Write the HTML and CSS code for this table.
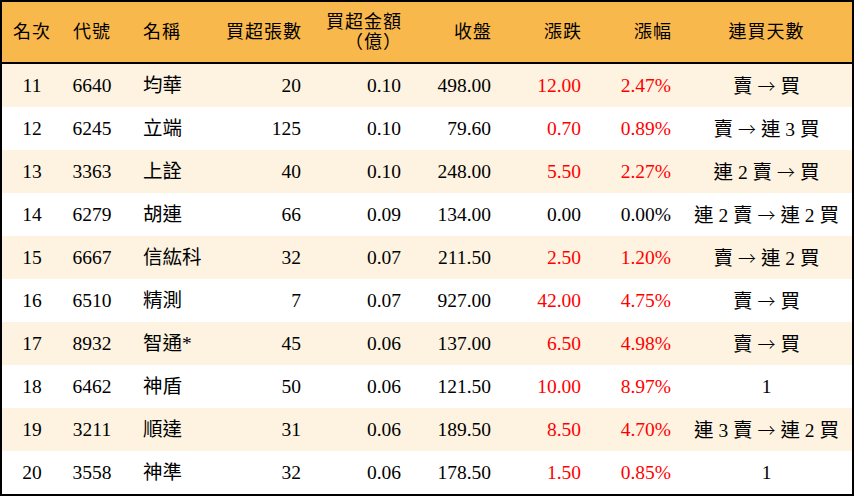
FILE: index.html
```html
<!DOCTYPE html>
<html lang="zh-Hant">
<head>
<meta charset="utf-8">
<title>買超排行</title>
<link rel="stylesheet" href="styles.css">
</head>
<body>
<table class="rank">
  <colgroup>
    <col class="w-rank"><col class="w-code"><col class="w-name"><col class="w-vol"><col class="w-amt"><col class="w-close"><col class="w-chg"><col class="w-pct"><col class="w-days">
  </colgroup>
  <thead>
    <tr>
      <th class="c">名次</th>
      <th class="c">代號</th>
      <th class="l">名稱</th>
      <th class="r">買超張數</th>
      <th class="r">買超金額<br>（億）</th>
      <th class="r">收盤</th>
      <th class="r">漲跌</th>
      <th class="r">漲幅</th>
      <th class="c">連買天數</th>
    </tr>
  </thead>
  <tbody>
    <tr class="odd"><td class="c">11</td><td class="c">6640</td><td class="l">均華</td><td class="r">20</td><td class="r">0.10</td><td class="r">498.00</td><td class="r up">12.00</td><td class="r up">2.47%</td><td class="c days">賣 <span class="arrow">→</span> 買</td></tr>
    <tr><td class="c">12</td><td class="c">6245</td><td class="l">立端</td><td class="r">125</td><td class="r">0.10</td><td class="r">79.60</td><td class="r up">0.70</td><td class="r up">0.89%</td><td class="c days">賣 <span class="arrow">→</span> 連 3 買</td></tr>
    <tr class="odd"><td class="c">13</td><td class="c">3363</td><td class="l">上詮</td><td class="r">40</td><td class="r">0.10</td><td class="r">248.00</td><td class="r up">5.50</td><td class="r up">2.27%</td><td class="c days">連 2 賣 <span class="arrow">→</span> 買</td></tr>
    <tr><td class="c">14</td><td class="c">6279</td><td class="l">胡連</td><td class="r">66</td><td class="r">0.09</td><td class="r">134.00</td><td class="r">0.00</td><td class="r">0.00%</td><td class="c days">連 2 賣 <span class="arrow">→</span> 連 2 買</td></tr>
    <tr class="odd"><td class="c">15</td><td class="c">6667</td><td class="l">信紘科</td><td class="r">32</td><td class="r">0.07</td><td class="r">211.50</td><td class="r up">2.50</td><td class="r up">1.20%</td><td class="c days">賣 <span class="arrow">→</span> 連 2 買</td></tr>
    <tr><td class="c">16</td><td class="c">6510</td><td class="l">精測</td><td class="r">7</td><td class="r">0.07</td><td class="r">927.00</td><td class="r up">42.00</td><td class="r up">4.75%</td><td class="c days">賣 <span class="arrow">→</span> 買</td></tr>
    <tr class="odd"><td class="c">17</td><td class="c">8932</td><td class="l">智通*</td><td class="r">45</td><td class="r">0.06</td><td class="r">137.00</td><td class="r up">6.50</td><td class="r up">4.98%</td><td class="c days">賣 <span class="arrow">→</span> 買</td></tr>
    <tr><td class="c">18</td><td class="c">6462</td><td class="l">神盾</td><td class="r">50</td><td class="r">0.06</td><td class="r">121.50</td><td class="r up">10.00</td><td class="r up">8.97%</td><td class="c days">1</td></tr>
    <tr class="odd"><td class="c">19</td><td class="c">3211</td><td class="l">順達</td><td class="r">31</td><td class="r">0.06</td><td class="r">189.50</td><td class="r up">8.50</td><td class="r up">4.70%</td><td class="c days">連 3 賣 <span class="arrow">→</span> 連 2 買</td></tr>
    <tr><td class="c">20</td><td class="c">3558</td><td class="l">神準</td><td class="r">32</td><td class="r">0.06</td><td class="r">178.50</td><td class="r up">1.50</td><td class="r up">0.85%</td><td class="c days">1</td></tr>
  </tbody>
</table>
</body>
</html>
```
FILE: styles.css
```css
html, body {
  margin: 0;
  padding: 0;
  background: #ffffff;
}

.rank {
  width: 854px;
  border-collapse: separate;
  border-spacing: 0;
  border: 2px solid #000000;
  table-layout: fixed;
  font-family: "Liberation Serif", "Noto Sans CJK TC", serif;
  font-size: 19.5px;
  color: #000000;
}

.w-rank { width: 60px; }
.w-code { width: 60px; }
.w-name { width: 89px; }
.w-vol { width: 100px; }
.w-amt { width: 100px; }
.w-close { width: 90px; }
.w-chg { width: 90px; }
.w-pct { width: 90px; }
.w-days { width: 171px; }

.rank th {
  background: #f9b84b;
  height: 60px;
  padding: 0 10px;
  font-weight: normal;
  font-size: 18px;
  line-height: 20px;
  letter-spacing: 1px;
  border-bottom: 2px solid #000000;
  vertical-align: middle;
  box-sizing: border-box;
}

.rank thead tr { height: 62px; }

.rank td {
  height: 43px;
  padding: 0 10px;
  line-height: 20px;
  vertical-align: middle;
  white-space: nowrap;
}

.rank tbody tr { height: 43px; }

.rank tr.odd td { background: #fdf3e0; }

.c { text-align: center; }
.l { text-align: left; }
.r { text-align: right; }

.rank th.l, .rank td.l { padding-left: 21px; }
.rank th.r { padding-right: 9px; }

.rank td.days {
  padding: 0;
  word-spacing: 0;
}

.arrow {
  font-family: "Noto Sans CJK TC", sans-serif;
  font-size: 18px;
  font-weight: 300;
}

.up { color: #ff0000; }
```
